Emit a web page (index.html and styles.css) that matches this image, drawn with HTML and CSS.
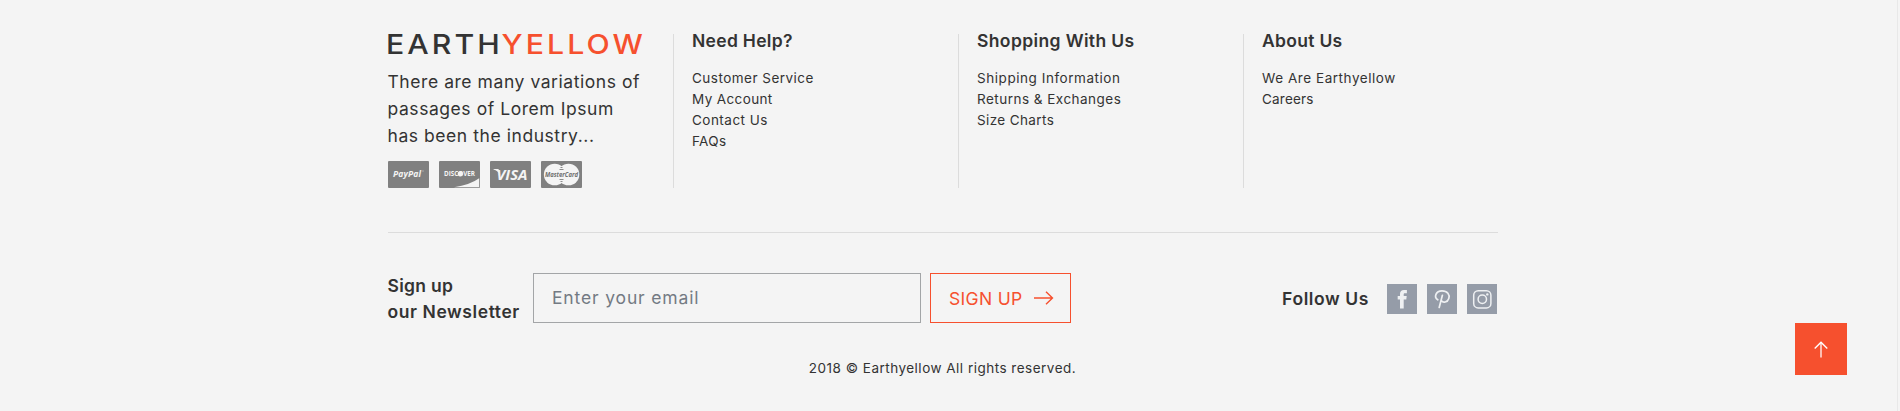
FILE: index.html
```html
<!DOCTYPE html>
<html lang="en">
<head>
<meta charset="utf-8">
<title>Earthyellow</title>
<link rel="stylesheet" href="styles.css">
</head>
<body>
<footer class="footer">
  <div class="container">
    <div class="columns">
      <section class="brand">
        <div class="logo"><span class="logo-dark">EARTH</span><span class="logo-accent">YELLOW</span></div>
        <p class="intro">There are many variations of<br>passages of Lorem Ipsum<br>has been the industry...</p>
        <div class="cards">
          <svg class="card" viewBox="0 0 41 27"><rect width="41" height="27" rx="1" fill="#808080"/><text class="paypal" x="5" y="16" textLength="28">PayPal</text><path d="M34 10h2" stroke="#bbb" stroke-width=".7"/></svg>
          <svg class="card" viewBox="0 0 41 27"><rect width="41" height="27" rx="1" fill="#808080"/><path d="M15 26.2Q31 24 40.2 17.3V26.2z" fill="#f4f4f4"/><circle cx="21.300" cy="12.800" r="2.600" fill="#f4f4f4"/><text class="discover" x="5" y="15.300" textLength="31" lengthAdjust="spacingAndGlyphs">DISCOVER</text></svg>
          <svg class="card" viewBox="0 0 41 27"><rect width="41" height="27" rx="1" fill="#808080"/><path d="M3.500 8h5l1.800 6Q8 9.700 3.500 8.500z" fill="#f4f4f4"/><text class="visa" x="6.500" y="19" textLength="31">VISA</text></svg>
          <svg class="card" viewBox="0 0 41 27"><rect width="41" height="27" rx="1" fill="#808080"/><circle cx="13.700" cy="13.500" r="10.800" fill="#f4f4f4"/><circle cx="27.500" cy="13.500" r="10.800" fill="#f4f4f4"/><path d="M19.500 6.500h2M18.500 8.500h4M18.500 18.500h4M19.500 20.500h2" stroke="#808080" stroke-width=".9"/><text class="mastercard" x="4" y="16" textLength="33" lengthAdjust="spacingAndGlyphs">MasterCard</text></svg>
        </div>
      </section>
      <section class="links">
        <h4 class="heading">Need Help?</h4>
        <ul class="list"><li>Customer Service</li><li class="snug">My Account</li><li>Contact Us</li><li class="snug">FAQs</li></ul>
      </section>
      <section class="links">
        <h4 class="heading wide">Shopping With Us</h4>
        <ul class="list"><li class="loose">Shipping Information</li><li>Returns &amp; Exchanges</li><li class="snug">Size Charts</li></ul>
      </section>
      <section class="links">
        <h4 class="heading">About Us</h4>
        <ul class="list"><li class="loose">We Are Earthyellow</li><li class="tight">Careers</li></ul>
      </section>
    </div>
    <div class="actions">
      <div class="newsletter-title"><span class="narrow">Sign up</span><br>our Newsletter</div>
      <input class="email" type="email" placeholder="Enter your email">
      <button class="signup">SIGN UP<svg class="arrow" viewBox="0 0 20 14" width="20" height="14"><path d="M0 7h18.500M12 .7 18.500 7 12 13.300" fill="none" stroke="#f6502e" stroke-width="1.400"/></svg></button>
      <div class="follow">
        <span class="follow-title">Follow Us</span>
        <svg class="social" viewBox="0 0 30 30"><rect width="30" height="30" fill="#959ca8"/><path d="M13 24.500V15.600h-2.300V12H13V10c0-2.700 1.500-4 4-4h2.900v3.200H18c-1 0-1.300.5-1.300 1.400V12h3l-.4 3.600h-2.600v8.900z" fill="#eef0f2"/></svg>
        <svg class="social" viewBox="0 0 30 30"><rect width="30" height="30" fill="#959ca8"/><path d="M10.800 15.800C6.700 13.200 8.600 6.900 15 6.800c5.500 0 8 3.800 6.800 7.600-1.300 4.200-5.900 4.700-7.300 2.400M15.400 11.300 12.200 23.500" fill="none" stroke="#eef0f2" stroke-width="1.700" stroke-linecap="round"/></svg>
        <svg class="social" viewBox="0 0 30 30"><rect width="30" height="30" fill="#959ca8"/><g fill="none" stroke="#eef0f2" stroke-width="1.500"><rect x="6.700" y="6.700" width="17.200" height="17.200" rx="4.500"/><circle cx="15.300" cy="15.300" r="4.200"/></g><circle cx="20.300" cy="10.400" r="1.200" fill="#eef0f2"/></svg>
      </div>
    </div>
    <p class="copyright">2018 © Earthyellow All rights reserved.</p>
  </div>
  <a class="to-top" href="#"><svg viewBox="0 0 14 17" width="14" height="17"><path d="M7 16.500V1" stroke="#fff" stroke-opacity=".7" stroke-width="1.800"/><path d="M.7 7.500 7 1.200l6.300 6.300" fill="none" stroke="#fff" stroke-width="1.400"/></svg></a>
</footer>
</body>
</html>
```
FILE: styles.css
```css
* { box-sizing: border-box; }
body { margin: 0; background: #f4f4f4; color: #333; font-family: Inter, "Liberation Sans", sans-serif; }
.footer { height: 411px; width: 1898px; padding-top: 34px; border-right: 1px solid #e8e8e8; overflow: hidden; }
.container { width: 1110px; margin-left: 387.5px; }
.columns { display: grid; grid-template-columns: 285px 285px 285px 255px; height: 154px; }
.logo { display: flex; height: 20px; margin-left: -2px; line-height: 20px; font-size: 27.5px; font-weight: 500; white-space: nowrap; transform: scaleX(1.1); transform-origin: 0 50%; }
.logo-dark { width: 105px; letter-spacing: 2.8px; }
.logo-accent { color: #f6502e; letter-spacing: 2.8px; }
.intro { margin: 14px 0 12px; font-size: 17.5px; line-height: 27px; letter-spacing: .56px; white-space: nowrap; }
.cards { display: flex; gap: 10px; }
.card { width: 41px; height: 27px; overflow: visible; }
.card text { fill: #f4f4f4; font-family: "Open Sans", sans-serif; font-weight: 700; }
.card .paypal { font-size: 8.5px; font-style: italic; }
.card .discover { font-size: 7px; }
.card .visa { font-size: 15px; font-style: italic; }
.card .mastercard { font-size: 7px; font-style: italic; fill: #707070; }
.links { border-left: 1px solid #dcdcdc; padding-left: 18.5px; }
.heading { margin: 0 0 20px; font-size: 17.5px; line-height: 14px; font-weight: 600; letter-spacing: .3px; }
.heading.wide { letter-spacing: .38px; }
.list { margin: 0; padding: 0; list-style: none; font-size: 13.5px; line-height: 21px; letter-spacing: .48px; }
.snug { letter-spacing: .38px; }
.loose { letter-spacing: .55px; }
.tight { letter-spacing: .2px; }
.actions { display: flex; height: 92px; margin-top: 44px; padding-top: 40px; border-top: 1px solid #dcdcdc; }
.newsletter-title { width: 145.5px; height: 52px; font-size: 17.5px; line-height: 26px; font-weight: 600; letter-spacing: .58px; white-space: nowrap; }
.narrow { letter-spacing: .3px; }
.email { width: 388px; height: 50px; padding: 0 18px 2px; border: 1px solid #a3a5a7; border-radius: 0; background: transparent; font: 400 17.5px Inter, sans-serif; letter-spacing: .85px; }
.email::placeholder { color: #737a83; opacity: 1; }
.signup { display: flex; align-items: center; width: 141px; height: 50px; margin-left: 9px; padding: 0 0 0 18px; border: 1px solid #f6502e; background: transparent; color: #f6502e; font: 400 17.5px Inter, sans-serif; letter-spacing: .32px; }
.arrow { margin-left: 11px; }
.follow { display: flex; align-items: center; gap: 10px; height: 50px; margin: 0 .5px 0 auto; }
.follow-title { margin-right: 8px; font-size: 17.5px; font-weight: 600; letter-spacing: .6px; }
.social { width: 30px; height: 30px; margin-top: 2px; }
.copyright { margin: 33.5px 0 0; font-size: 13.5px; line-height: 21px; letter-spacing: .49px; text-align: center; }
.to-top { position: fixed; left: 1795px; top: 323px; display: flex; align-items: center; justify-content: center; width: 52px; height: 52px; background: #f6502e; }
```
